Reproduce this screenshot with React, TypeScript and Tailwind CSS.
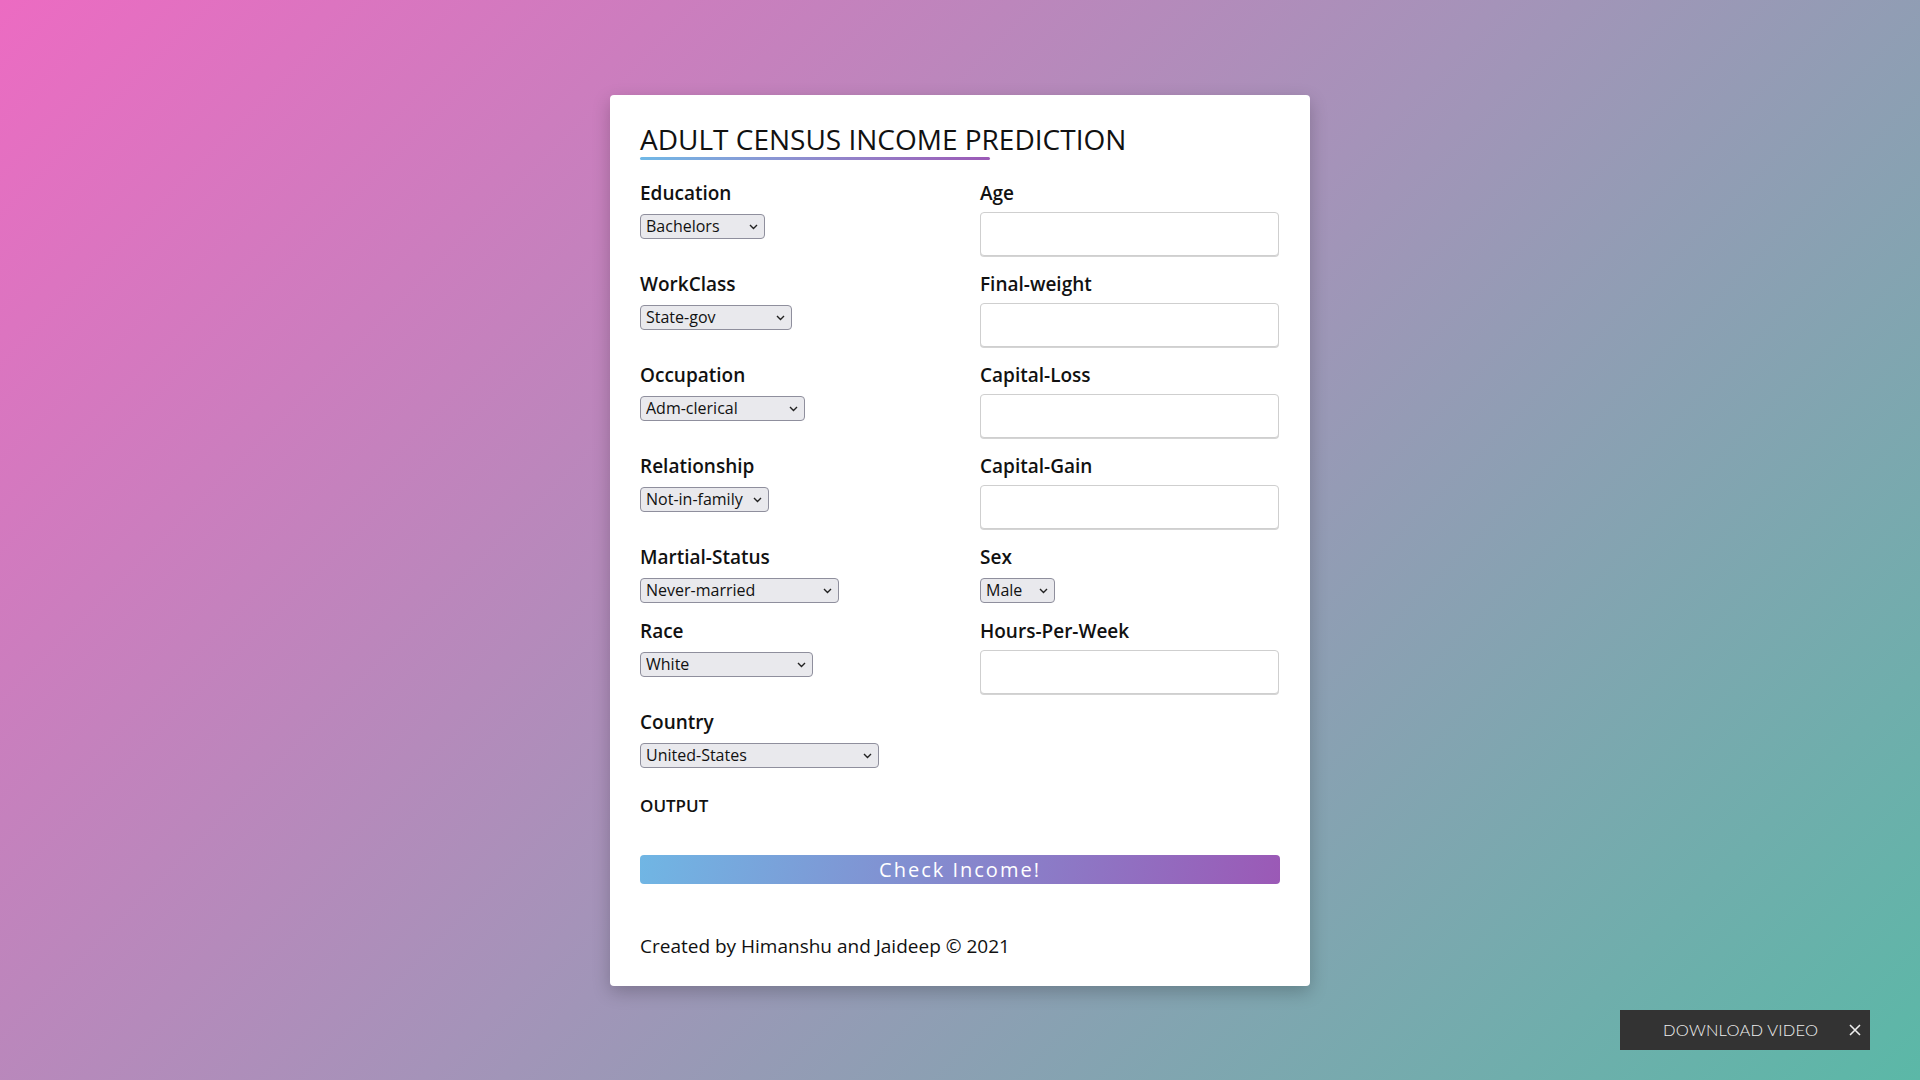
import React from 'react'

const selects: Record<string, { value: string; width: string }> = {
  Education: { value: 'Bachelors', width: 'w-[125px]' },
  WorkClass: { value: 'State-gov', width: 'w-[152px]' },
  Occupation: { value: 'Adm-clerical', width: 'w-[165px]' },
  Relationship: { value: 'Not-in-family', width: 'w-[129px]' },
  'Martial-Status': { value: 'Never-married', width: 'w-[199px]' },
  Race: { value: 'White', width: 'w-[173px]' },
  Country: { value: 'United-States', width: 'w-[239px]' },
  Sex: { value: 'Male', width: 'w-[75px]' },
}

const Label = ({ children }: { children: React.ReactNode }) => (
  <label className="block text-[19px] leading-[27px] font-semibold text-[#111]">{children}</label>
)

const SelectField = ({ name }: { name: string }) => {
  const s = selects[name]
  return (
    <div>
      <Label>{name}</Label>
      <div className={`relative mt-[7px] ${s.width}`}>
        <select
          defaultValue={s.value}
          className="block w-full h-[25px] appearance-none bg-[#e9e9ed] border border-[#8f8f9d] rounded-[4px] pl-[5px] text-[16px] leading-[23px] text-[#111] outline-none"
        >
          <option>{s.value}</option>
        </select>
        <svg
          className="absolute right-[7px] top-[10px] pointer-events-none"
          width="9"
          height="6"
          viewBox="0 0 9 6"
          fill="none"
        >
          <path d="M1 1l3.5 3.5L8 1" stroke="#222" strokeWidth="1.4" />
        </svg>
      </div>
    </div>
  )
}

const InputField = ({ name }: { name: string }) => (
  <div>
    <Label>{name}</Label>
    <input
      type="text"
      className="mt-[5px] block w-[299px] h-[44px] bg-white border border-[#cfcfcf] rounded-[4px] shadow-[0_1px_0_#d4d4d4] outline-none px-3"
    />
  </div>
)

export default function App() {
  return (
    <div className="relative h-screen w-full overflow-hidden bg-[linear-gradient(135deg,#ec6bc2_0%,#a593b9_50%,#5bb8a7_100%)] flex justify-center pt-[95px] font-['Open_Sans',sans-serif]">
      <div className="w-[700px] h-fit bg-white rounded-[4px] shadow-[0_6px_18px_rgba(0,0,0,0.22)] px-[30px] pt-[27px] pb-[26px]">
        <h1 className="text-[28px] leading-[35px] text-[#111]">ADULT CENSUS INCOME PREDICTION</h1>
        <div className="h-[3px] w-[350px] rounded-full bg-gradient-to-r from-[#6fb8e6] to-[#9b59b6]" />

        <div className="mt-[20px] grid grid-cols-[300px_300px] gap-x-[40px] gap-y-[15px] items-start">
          <SelectField name="Education" />
          <InputField name="Age" />
          <SelectField name="WorkClass" />
          <InputField name="Final-weight" />
          <SelectField name="Occupation" />
          <InputField name="Capital-Loss" />
          <SelectField name="Relationship" />
          <InputField name="Capital-Gain" />
          <SelectField name="Martial-Status" />
          <SelectField name="Sex" />
          <SelectField name="Race" />
          <InputField name="Hours-Per-Week" />
          <SelectField name="Country" />
        </div>

        <p className="mt-[26px] text-[17px] leading-[24px] font-semibold text-[#111]">OUTPUT</p>

        <button className="mt-[37px] block w-full h-[29px] rounded-[4px] bg-[linear-gradient(100deg,#70b6e4,#9b59b6)] text-white text-[20px] leading-[29px] tracking-[2px]">
          Check Income!
        </button>

        <p className="mt-[49px] text-[19px] leading-[27px] text-[#111]">
          Created by Himanshu and Jaideep © 2021
        </p>
      </div>

      <div className="absolute right-[50px] bottom-[30px] w-[250px] h-[40px] bg-[#333] flex items-center">
        <span className="pl-[43px] text-[16.5px] font-light text-[#eee] tracking-[0.2px] font-['Lato',sans-serif]">
          DOWNLOAD VIDEO
        </span>
        <svg className="ml-auto mr-[9px]" width="12" height="12" viewBox="0 0 12 12">
          <path d="M1 1l10 10M11 1L1 11" stroke="#eee" strokeWidth="1.6" />
        </svg>
      </div>
    </div>
  )
}
